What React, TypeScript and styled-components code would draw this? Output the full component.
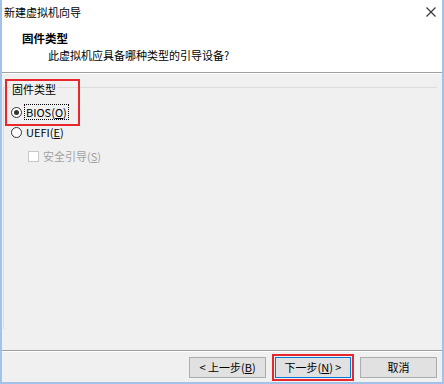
import { createGlobalStyle, styled } from "styled-components";

const GlobalStyle = createGlobalStyle`
  html, body {
    margin: 0;
    padding: 0;
    background: #ffffff;
  }
  body {
    font-family: "Noto Sans CJK SC", "Microsoft YaHei", sans-serif;
    font-size: 11px;
    color: #000000;
  }
`;

const Window = styled.div`
  width: 444px;
  height: 384px;
  box-sizing: border-box;
  display: flex;
  flex-direction: column;
  border: 2px solid #a2c2e8;
  border-top: none;
  background: #f0f0f0;
`;

const TitleBar = styled.div`
  height: 24px;
  display: flex;
  align-items: center;
  justify-content: space-between;
  padding: 0 6px 0 2px;
  background: #ffffff;
  line-height: 24px;
`;

const Header = styled.div`
  height: 49px;
  padding: 6px 0 0 20px;
  box-sizing: border-box;
  background: #ffffff;
  border-bottom: 1px solid #a0a0a0;
  line-height: 16px;
`;

const HeaderTitle = styled.div`
  font-weight: 700;
  font-size: 11.5px;
`;

const HeaderSub = styled.div`
  margin: 1px 0 0 26px;
`;

const Body = styled.div`
  flex: 1;
  border-top: 1px solid #ffffff;
  padding: 5px 0 0 3px;
`;

const Group = styled.div`
  position: relative;
  height: 250px;

  &::before {
    content: "";
    position: absolute;
    top: 8px;
    left: -2px;
    right: 5px;
    bottom: 0;
    border-top: 1px solid #dcdcdc;
    border-left: 1px solid #dcdcdc;
  }
`;

const Highlight = styled.div`
  position: relative;
  width: 75px;
  box-sizing: border-box;
  border: 2px solid #e8262b;
  padding: 0 0 4px 4px;
`;

const Legend = styled.span`
  display: inline-block;
  padding: 0 1px;
  line-height: 16px;
  background: #f0f0f0;
`;

const OptionRow = styled.div<{ $top: number; $left: number; $height: number }>`
  position: relative;
  display: flex;
  align-items: center;
  gap: 2px;
  height: ${({ $height }) => $height}px;
  margin-top: ${({ $top }) => $top}px;
  margin-left: ${({ $left }) => $left}px;
`;

const Radio = styled.span<{ $checked?: boolean }>`
  position: relative;
  width: 11px;
  height: 11px;
  box-sizing: border-box;
  border-radius: 50%;
  border: 1px solid #333333;
  background: #ffffff;
  flex-shrink: 0;

  &::after {
    content: "";
    display: ${({ $checked }) => ($checked ? "block" : "none")};
    position: absolute;
    left: 2px;
    top: 2px;
    width: 5px;
    height: 5px;
    border-radius: 50%;
    background: #333333;
  }
`;

const Check = styled.span`
  width: 11px;
  height: 11px;
  box-sizing: border-box;
  border: 1px solid #c8c8c8;
  background: #ffffff;
  flex-shrink: 0;
`;

const OptionLabel = styled.span<{ $focused?: boolean; $disabled?: boolean }>`
  padding: 0 1px;
  line-height: 14px;
  border: 1px dotted ${({ $focused }) => ($focused ? "#000000" : "transparent")};
  color: ${({ $disabled }) => ($disabled ? "#a0a0a0" : "#000000")};
  white-space: nowrap;
`;

const Footer = styled.div`
  display: flex;
  justify-content: flex-end;
  gap: 9px;
  padding: 6px 5px 4px 0;
  border-top: 1px solid #a0a0a0;
  box-shadow: inset 0 1px 0 #ffffff;
`;

const Button = styled.button<{ $width: number; $primary?: boolean }>`
  width: ${({ $width }) => $width}px;
  height: 21px;
  padding: 0;
  font: inherit;
  font-size: 11px;
  line-height: 19px;
  color: #000000;
  background: #e1e1e1;
  border: 1px solid ${({ $primary }) => ($primary ? "#0078d7" : "#adadad")};
  outline: ${({ $primary }) => ($primary ? "2px solid #e8262b" : "none")};
  outline-offset: 1px;
`;

function CloseIcon() {
  return (
    <svg width="10" height="10" viewBox="0 0 10 10">
      <path d="M0.5 0.5L9.5 9.5M9.5 0.5L0.5 9.5" stroke="#333333" strokeWidth="1.1" />
    </svg>
  );
}

export default function App() {
  return (
    <>
      <GlobalStyle />
      <Window>
        <TitleBar>
          <span>新建虚拟机向导</span>
          <CloseIcon />
        </TitleBar>
        <Header>
          <HeaderTitle>固件类型</HeaderTitle>
          <HeaderSub>此虚拟机应具备哪种类型的引导设备?</HeaderSub>
        </Header>
        <Body>
          <Group>
            <Highlight>
              <Legend>固件类型</Legend>
              <OptionRow $top={7} $left={0} $height={16}>
                <Radio $checked />
                <OptionLabel $focused>
                  BIOS(<u>O</u>)
                </OptionLabel>
              </OptionRow>
            </Highlight>
            <OptionRow $top={0} $left={6} $height={12}>
              <Radio />
              <OptionLabel>
                UEFI(<u>E</u>)
              </OptionLabel>
            </OptionRow>
            <OptionRow $top={12} $left={23} $height={12}>
              <Check />
              <OptionLabel $disabled>
                安全引导(<u>S</u>)
              </OptionLabel>
            </OptionRow>
          </Group>
        </Body>
        <Footer>
          <Button $width={77}>
            &lt; 上一步(<u>B</u>)
          </Button>
          <Button $width={76} $primary>
            下一步(<u>N</u>) &gt;
          </Button>
          <Button $width={77}>取消</Button>
        </Footer>
      </Window>
    </>
  );
}
